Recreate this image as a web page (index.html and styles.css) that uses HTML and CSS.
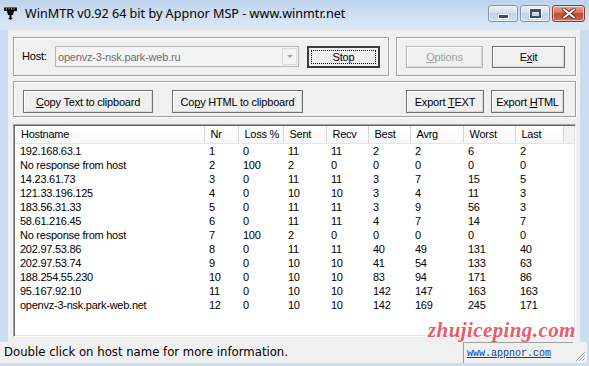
FILE: index.html
```html
<!DOCTYPE html>
<html>
<head>
<meta charset="utf-8">
<title>WinMTR</title>
<link rel="stylesheet" href="styles.css">
</head>
<body>
<div class="window">
  <div class="titlebar">
    <svg class="app-icon" width="13" height="13" viewBox="0 0 13 13">
      <rect x="0" y="0.5" width="13" height="3.5" fill="#000"/>
      <rect x="2" y="1.5" width="1" height="1" fill="#fff"/>
      <rect x="4.5" y="1.5" width="1" height="1" fill="#fff"/>
      <rect x="7" y="1.5" width="1" height="1" fill="#fff"/>
      <rect x="9.5" y="1.5" width="1" height="1" fill="#fff"/>
      <path d="M3 4 H10 L9 8 H4 Z" fill="#000"/>
      <rect x="5.5" y="8" width="2" height="3" fill="#000"/>
      <path d="M4 11 H9 L6.5 13 Z" fill="#000"/>
    </svg>
    <span class="title">WinMTR v0.92 64 bit by Appnor MSP - www.winmtr.net</span>
    <div class="caption-buttons">
      <div class="cb cb-min"><span class="glyph-min"></span></div>
      <div class="cb cb-max"><span class="glyph-max"></span></div>
      <div class="cb cb-close">
        <svg width="14" height="11" viewBox="0 0 14 11">
          <path d="M2 1.5 L12 9.5 M12 1.5 L2 9.5" stroke="#5a1e14" stroke-width="3.6" stroke-linecap="round"/>
          <path d="M2 1.5 L12 9.5 M12 1.5 L2 9.5" stroke="#fff" stroke-width="2.2" stroke-linecap="round"/>
        </svg>
      </div>
    </div>
  </div>

  <div class="client">
    <div class="top-row">
      <div class="group g-host">
        <span class="host-label">Host:</span>
        <div class="combo">
          <span class="combo-text">openvz-3-nsk.park-web.ru</span>
          <span class="combo-arrow"><span class="tri"></span></span>
        </div>
        <div class="btn btn-default btn-stop"><span class="focus-rect">Stop</span></div>
      </div>
      <div class="group g-opts">
        <div class="btn btn-disabled btn-options"><span><u>O</u>ptions</span></div>
        <div class="btn btn-exit"><span>E<u>x</u>it</span></div>
      </div>
    </div>

    <div class="group g-copy">
      <div class="btn btn-copy-text"><span><u>C</u>opy Text to clipboard</span></div>
      <div class="btn btn-copy-html"><span>Co<u>p</u>y HTML to clipboard</span></div>
      <div class="spacer"></div>
      <div class="btn btn-export-text"><span>Export <u>T</u>EXT</span></div>
      <div class="btn btn-export-html"><span>Export <u>H</u>TML</span></div>
    </div>

    <div class="list">
      <table class="grid">
        <colgroup>
          <col class="c-host"><col class="c-nr"><col class="c-loss"><col class="c-sent"><col class="c-recv"><col class="c-best"><col class="c-avrg"><col class="c-worst"><col class="c-last"><col class="c-fill">
        </colgroup>
        <thead>
          <tr><th>Hostname</th><th>Nr</th><th>Loss %</th><th>Sent</th><th>Recv</th><th>Best</th><th>Avrg</th><th>Worst</th><th>Last</th><th class="fill"></th></tr>
        </thead>
        <tbody>
          <tr><td>192.168.63.1</td><td>1</td><td>0</td><td>11</td><td>11</td><td>2</td><td>2</td><td>6</td><td>2</td><td></td></tr>
          <tr><td>No response from host</td><td>2</td><td>100</td><td>2</td><td>0</td><td>0</td><td>0</td><td>0</td><td>0</td><td></td></tr>
          <tr><td>14.23.61.73</td><td>3</td><td>0</td><td>11</td><td>11</td><td>3</td><td>7</td><td>15</td><td>5</td><td></td></tr>
          <tr><td>121.33.196.125</td><td>4</td><td>0</td><td>10</td><td>10</td><td>3</td><td>4</td><td>11</td><td>3</td><td></td></tr>
          <tr><td>183.56.31.33</td><td>5</td><td>0</td><td>11</td><td>11</td><td>3</td><td>9</td><td>56</td><td>3</td><td></td></tr>
          <tr><td>58.61.216.45</td><td>6</td><td>0</td><td>11</td><td>11</td><td>4</td><td>7</td><td>14</td><td>7</td><td></td></tr>
          <tr><td>No response from host</td><td>7</td><td>100</td><td>2</td><td>0</td><td>0</td><td>0</td><td>0</td><td>0</td><td></td></tr>
          <tr><td>202.97.53.86</td><td>8</td><td>0</td><td>11</td><td>11</td><td>40</td><td>49</td><td>131</td><td>40</td><td></td></tr>
          <tr><td>202.97.53.74</td><td>9</td><td>0</td><td>10</td><td>10</td><td>41</td><td>54</td><td>133</td><td>63</td><td></td></tr>
          <tr><td>188.254.55.230</td><td>10</td><td>0</td><td>10</td><td>10</td><td>83</td><td>94</td><td>171</td><td>86</td><td></td></tr>
          <tr><td>95.167.92.10</td><td>11</td><td>0</td><td>10</td><td>10</td><td>142</td><td>147</td><td>163</td><td>163</td><td></td></tr>
          <tr><td>openvz-3-nsk.park-web.net</td><td>12</td><td>0</td><td>10</td><td>10</td><td>142</td><td>169</td><td>245</td><td>171</td><td></td></tr>
        </tbody>
      </table>
    </div>
  </div>

  <div class="statusbar">
    <div class="status-main">Double click on host name for more information.</div>
    <div class="status-link"><span class="link">www.appnor.com</span></div>
    <svg class="grip" width="12" height="12" viewBox="0 0 12 12">
      <path d="M11 2 L2 11 M11 5 L5 11 M11 8 L8 11" stroke="#a0a0a0" stroke-width="1"/>
      <path d="M11.8 2.8 L2.8 11.8 M11.8 5.8 L5.8 11.8 M11.8 8.8 L8.8 11.8" stroke="#fff" stroke-width="1"/>
    </svg>
  </div>

  <div class="watermark">zhujiceping.com</div>
</div>
</body>
</html>
```

FILE: styles.css
```css
html, body {
  margin: 0;
  padding: 0;
}

body {
  width: 589px;
  height: 366px;
  overflow: hidden;
  background: #c5d8ee;
}

.window {
  position: relative;
  width: 589px;
  height: 366px;
  background: linear-gradient(180deg, #b8cfe9 0px, #c9dbf0 30px, #cddef1 100%);
  font-family: "Liberation Sans", Arial, sans-serif;
  font-size: 11px;
  color: #000;
  display: flex;
  flex-direction: column;
}

/* ---------- title bar ---------- */
.titlebar {
  height: 30px;
  display: flex;
  align-items: center;
  position: relative;
  background: linear-gradient(180deg, #bdd3ec 0%, #d3e2f3 60%, #dbe7f5 100%);
}

.app-icon {
  margin-left: 4px;
  margin-top: -3px;
}

.title {
  margin-left: 8px;
  margin-top: -3px;
  font-family: "Noto Sans", "DejaVu Sans", sans-serif;
  font-size: 12.6px;
  color: #000;
  white-space: nowrap;
}

.caption-buttons {
  position: absolute;
  top: 5px;
  left: 488px;
  display: flex;
  gap: 2px;
}

.cb {
  height: 17px;
  border: 1px solid #7b92b0;
  border-radius: 3px;
  box-sizing: border-box;
  display: flex;
  align-items: center;
  justify-content: center;
  box-shadow: inset 0 0 0 1px rgba(255, 255, 255, 0.6);
  background: linear-gradient(180deg, #e9f0f9 0%, #d4e1f1 45%, #c2d4ea 50%, #cddcee 100%);
}

.cb-min { width: 30px; }
.cb-max { width: 30px; }
.cb-close {
  width: 33px;
  border-color: #8a3b2e;
  background: linear-gradient(180deg, #e7a597 0%, #d8765f 45%, #c4482c 50%, #d26b4f 100%);
}

.glyph-min {
  width: 9px;
  height: 3px;
  margin-top: 5px;
  background: #3c4e68;
  border: 1px solid #fff;
}

.glyph-max {
  width: 7px;
  height: 4px;
  border: 2px solid #3c4e68;
  border-top-width: 3px;
  outline: 1px solid #fff;
}

/* ---------- client area ---------- */
.client {
  margin: 0 9px 0 8px;
  height: 312px;
  box-sizing: border-box;
  background: #f0f0f0;
  padding: 7px 4px 5px 5px;
  display: flex;
  flex-direction: column;
}

.top-row {
  display: flex;
  gap: 7px;
}

.group {
  box-sizing: border-box;
  border: 1px solid #a0a0a0;
  box-shadow: inset 1px 1px 0 #fff, 1px 1px 0 #fff;
  display: flex;
  align-items: flex-start;
}

.g-host {
  width: 376px;
  height: 39px;
  padding: 8px 0 0 8px;
}

.g-opts {
  width: 180px;
  height: 39px;
  padding: 8px 0 0 9px;
}

.g-copy {
  margin-top: 5px;
  width: 563px;
  height: 36px;
  padding: 8px 0 0 9px;
}

.host-label {
  line-height: 21px;
  letter-spacing: -0.2px;
  width: 33px;
}

.combo {
  width: 244px;
  height: 21px;
  box-sizing: border-box;
  border: 1px solid #b5b5b5;
  background: #f4f4f4;
  display: flex;
  align-items: center;
  position: relative;
}

.combo-text {
  padding-left: 2px;
  color: #6d6d6d;
  letter-spacing: -0.2px;
}

.combo-arrow {
  position: absolute;
  right: 1px;
  top: 1px;
  width: 15px;
  height: 17px;
  box-sizing: border-box;
  border: 1px solid #dadada;
  background: #f4f4f4;
  display: flex;
  align-items: center;
  justify-content: center;
}

.tri {
  width: 0;
  height: 0;
  border-left: 3px solid transparent;
  border-right: 3px solid transparent;
  border-top: 3px solid #a0a0a0;
}

.btn {
  box-sizing: border-box;
  height: 22px;
  border: 1px solid #707070;
  box-shadow: inset 1px 1px 0 #fff, inset -1px -1px 0 #d8d8d8;
  background: #f0f0f0;
  display: flex;
  align-items: center;
  justify-content: center;
  letter-spacing: -0.2px;
  white-space: nowrap;
}

.btn u {
  text-decoration: underline;
  text-underline-offset: 1px;
}

.btn-default {
  border: 2px solid #3c3c3c;
  box-shadow: none;
  padding: 2px;
}

.focus-rect {
  width: 100%;
  height: 100%;
  box-sizing: border-box;
  border: 1px dotted #000;
  display: flex;
  align-items: center;
  justify-content: center;
}

.btn-stop {
  width: 73px;
  margin-left: 8px;
}

.btn-disabled {
  color: #a0a0a0;
  border-color: #b5b5b5;
}

.btn-options { width: 77px; }
.btn-exit { width: 73px; margin-left: 9px; }

.g-copy .btn { height: 23px; }
.btn-copy-text { width: 130px; }
.btn-copy-html { width: 131px; margin-left: 19px; }
.spacer { width: 103px; }
.btn-export-text { width: 78px; }
.btn-export-html { width: 73px; margin-left: 7px; }

/* ---------- list view ---------- */
.list {
  margin-top: 7px;
  flex: 1;
  box-sizing: border-box;
  border: 1px solid;
  border-color: #a0a0a0 #fff #fff #a0a0a0;
  box-shadow: inset 1px 1px 0 #696969, inset -1px -1px 0 #e3e3e3;
  background: #fff;
  padding: 1px;
  overflow: hidden;
}

.grid {
  border-collapse: collapse;
  table-layout: fixed;
  width: 559px;
  letter-spacing: -0.25px;
}

.c-host { width: 189px; }
.c-nr { width: 34px; }
.c-loss { width: 45px; }
.c-sent { width: 43px; }
.c-recv { width: 42px; }
.c-best { width: 42px; }
.c-avrg { width: 53px; }
.c-worst { width: 52px; }
.c-last { width: 48px; }
.c-fill { width: 11px; }

.grid th {
  height: 17px;
  padding: 0 0 0 6px;
  font-weight: normal;
  text-align: left;
  background: linear-gradient(180deg, #ffffff 0%, #f7f8fa 100%);
  border-right: 1px solid #d5d5d5;
  border-bottom: 1px solid #e5e5e5;
  box-sizing: border-box;
  white-space: nowrap;
}

.grid th.fill {
  background: #f2f2f2;
  border-right: none;
}

.grid td {
  height: 14px;
  padding: 0 0 0 5px;
  line-height: 14px;
  white-space: nowrap;
}

/* ---------- status bar ---------- */
.statusbar {
  height: 21px;
  margin-right: 2px;
  background: #f0f0f0;
  display: flex;
  align-items: stretch;
  position: relative;
}

.status-main {
  width: 463px;
  box-sizing: border-box;
  padding-left: 4px;
  line-height: 21px;
  font-family: "DejaVu Sans", sans-serif;
  font-size: 11.7px;
  color: #000;
  white-space: nowrap;
}

.status-link {
  width: 110px;
  box-sizing: border-box;
  border-top: 1px solid #a0a0a0;
  border-left: 1px solid #a0a0a0;
  padding-left: 3px;
  display: flex;
  align-items: center;
}

.link {
  font-family: "Liberation Mono", monospace;
  font-size: 10px;
  color: #0b3ea0;
  text-decoration: underline;
  letter-spacing: 0;
}

.grip {
  position: absolute;
  right: 1px;
  bottom: 1px;
}

/* ---------- watermark ---------- */
.watermark {
  position: absolute;
  left: 428px;
  top: 318px;
  font-family: "Liberation Serif", serif;
  font-weight: bold;
  font-style: italic;
  font-size: 21px;
  letter-spacing: 0.4px;
  color: rgba(232, 70, 86, 0.9);
  white-space: nowrap;
}
```
